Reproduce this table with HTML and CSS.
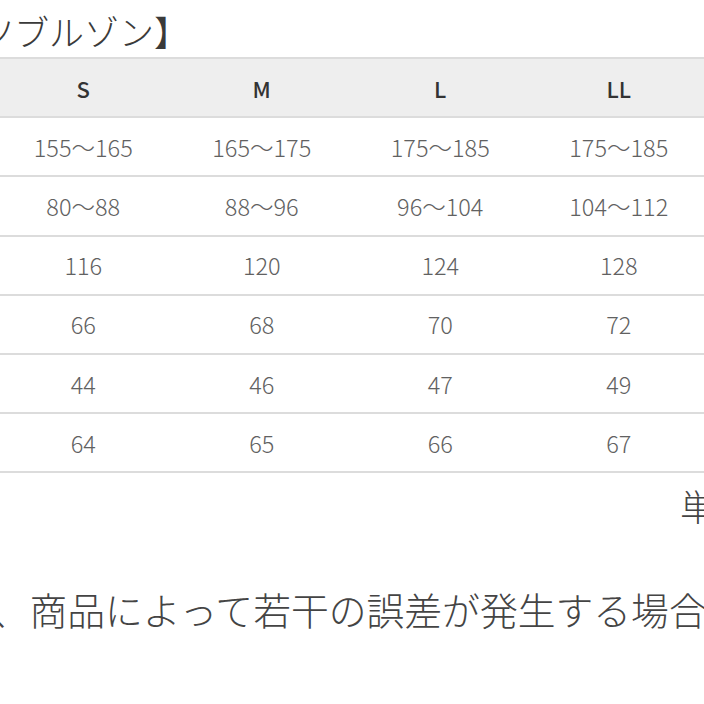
FILE: index.html
```html
<!DOCTYPE html>
<html lang="ja">
<head>
<meta charset="utf-8">
<link rel="stylesheet" href="styles.css">
</head>
<body>
<div class="page">
  <div class="title">【シャツブルゾン】</div>
  <div class="chart">
    <div class="row head"><div>S</div><div>M</div><div>L</div><div>LL</div></div>
    <div class="row"><div>155〜165</div><div>165〜175</div><div>175〜185</div><div>175〜185</div></div>
    <div class="row"><div>80〜88</div><div>88〜96</div><div>96〜104</div><div>104〜112</div></div>
    <div class="row"><div>116</div><div>120</div><div>124</div><div>128</div></div>
    <div class="row"><div>66</div><div>68</div><div>70</div><div>72</div></div>
    <div class="row"><div>44</div><div>46</div><div>47</div><div>49</div></div>
    <div class="row"><div>64</div><div>65</div><div>66</div><div>67</div></div>
  </div>
  <div class="unit">単位：cm</div>
  <div class="note">※サイズは平置き採寸となり、商品によって若干の誤差が発生する場合がございます。</div>
</div>
</body>
</html>
```

FILE: styles.css
```css
html, body {
  margin: 0;
  padding: 0;
  background: #ffffff;
  overflow: hidden;
}
.page {
  width: 704px;
  height: 704px;
  overflow: hidden;
  font-family: "Noto Sans CJK JP", "Noto Sans", sans-serif;
  font-weight: 300;
  color: #555;
}
.title {
  box-sizing: border-box;
  height: 57px;
  padding-top: 6px;
  line-height: 50px;
  font-size: 35px;
  color: #3a3a3a;
  white-space: nowrap;
  margin-left: -126px;
}
.chart {
  margin-left: -6px;
  width: 714px;
  border-top: 2px solid #dcdcdc;
}
.row {
  display: grid;
  grid-template-columns: repeat(4, 178.5px);
  box-sizing: border-box;
  height: 59.2px;
  border-bottom: 2px solid #dcdcdc;
  align-items: center;
  text-align: center;
  font-size: 23.5px;
  color: #616161;
}
.row.head {
  background: #eeeeee;
  color: #333333;
  font-weight: 500;
  font-size: 22px;
}
.unit {
  margin-top: 10px;
  padding-left: 680px;
  font-size: 36px;
  line-height: 44px;
  color: #444;
  white-space: nowrap;
}
.note {
  margin-top: 60px;
  margin-left: -496px;
  font-size: 37.8px;
  line-height: 44px;
  color: #444;
  white-space: nowrap;
}
```
